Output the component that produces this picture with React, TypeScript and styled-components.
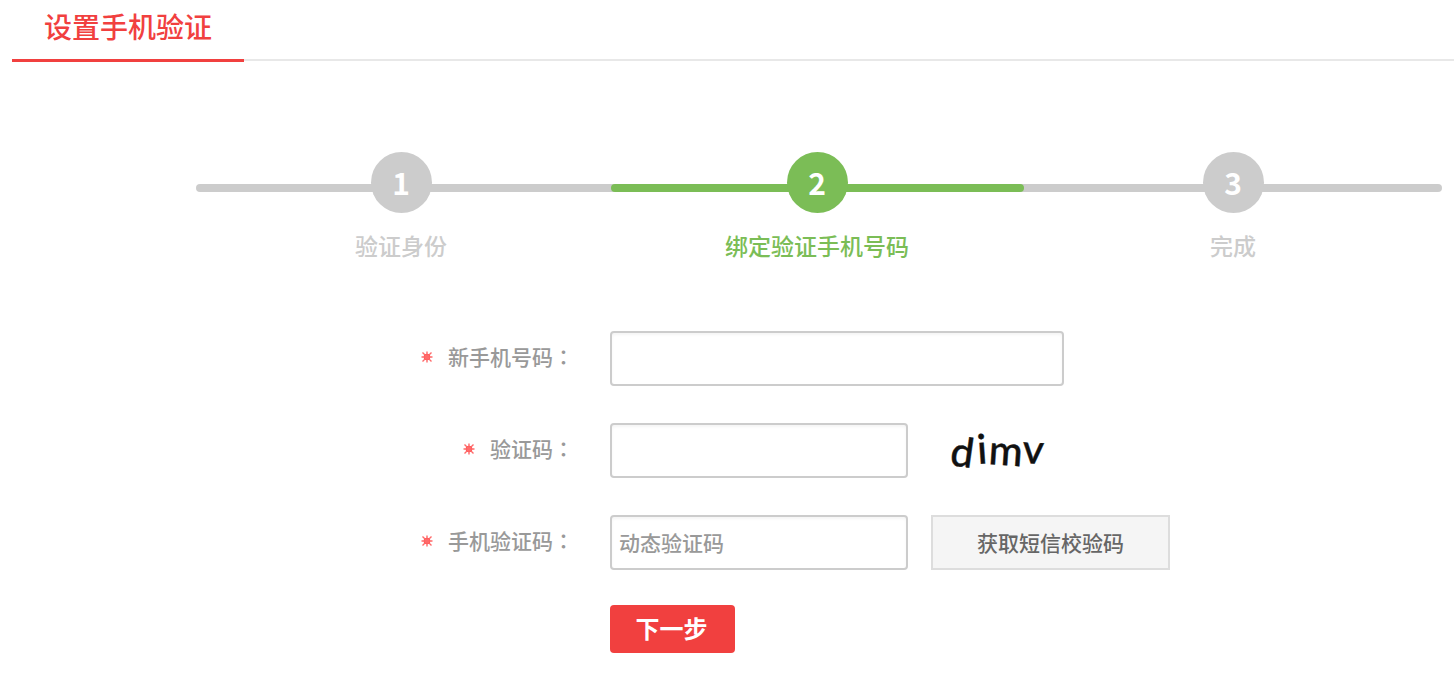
import React from 'react';
import styled, { createGlobalStyle } from 'styled-components';

const GlobalStyle = createGlobalStyle`
  *, *::before, *::after { box-sizing: border-box; }
  body {
    margin: 0;
    background: #fff;
    font-family: "Noto Sans CJK SC", "Liberation Sans", sans-serif;
    font-weight: 500;
    color: #999;
  }
  button, input { font-family: inherit; font-weight: inherit; }
`;

const Header = styled.header`
  display: flex;
  margin-left: 12px;
  height: 61px;
  border-bottom: 2px solid #e8e8e8;
`;

const Tab = styled.h1`
  margin: 0 0 -3px;
  width: 232px;
  padding: 6px 32px 0;
  border-bottom: 3px solid #f1403f;
  color: #f1403f;
  font-size: 28px;
  line-height: 40px;
  font-weight: 500;
  white-space: nowrap;
`;

const Steps = styled.ol`
  display: grid;
  grid-template-columns: repeat(3, 1fr);
  list-style: none;
  margin: 91px 13px 0 193px;
  padding: 0;
`;

const Step = styled.li<{ $active?: boolean }>`
  color: ${(p) => (p.$active ? '#7bbd56' : '#ccc')};
  text-align: center;
`;

const Marker = styled.div`
  display: grid;
  align-items: center;
  justify-items: center;
`;

const Rail = styled.div<{ $edge?: 'start' | 'end' }>`
  grid-area: 1 / 1;
  justify-self: stretch;
  height: 8px;
  margin-top: 10px;
  margin-left: ${(p) => (p.$edge === 'start' ? '3px' : '0')};
  margin-right: ${(p) => (p.$edge === 'end' ? '-1px' : '0')};
  padding: 0 1px 0 2px;
  background: #ccc;
  border-radius: ${(p) =>
    p.$edge === 'start' ? '4px 0 0 4px' : p.$edge === 'end' ? '0 4px 4px 0' : '0'};
`;

const RailFill = styled.div`
  height: 8px;
  border-radius: 4px;
  background: #7bbd56;
`;

const Circle = styled.span`
  grid-area: 1 / 1;
  z-index: 1;
  width: 61px;
  height: 61px;
  border-radius: 50%;
  background: currentColor;
`;

const Digit = styled.span`
  display: block;
  color: #fff;
  font-size: 30px;
  line-height: 61px;
  font-weight: 700;
`;

const StepName = styled.div`
  margin-top: 15px;
  font-size: 23px;
  line-height: 34px;
`;

const Form = styled.form`
  display: grid;
  grid-template-columns: 574px 1fr;
  column-gap: 36px;
  row-gap: 37px;
  align-items: center;
  margin-top: 69px;
`;

const Label = styled.label`
  display: flex;
  align-items: center;
  justify-content: flex-end;
  gap: 15px;
  padding-bottom: 6px;
  font-size: 21px;
  line-height: 30px;
  white-space: nowrap;
`;

const Colon = styled.span`
  font-family: "Noto Sans CJK TC", sans-serif;
`;

const Field = styled.div`
  display: flex;
  align-items: center;
  gap: 23px;
`;

const TextInput = styled.input<{ $wide?: boolean }>`
  width: ${(p) => (p.$wide ? '454px' : '298px')};
  height: 55px;
  padding: 0 7px 2px;
  border: 2px solid #ccc;
  border-radius: 4px;
  background: #fff;
  box-shadow: inset 0 2px 3px #f5f5f5;
  color: #333;
  font-size: 21px;
  outline: none;
  &::placeholder { color: #999; opacity: 1; }
`;

const SmsButton = styled.button`
  width: 239px;
  height: 55px;
  padding: 0 0 2px;
  border: 2px solid #ddd;
  background: #f5f5f5;
  color: #666;
  font-size: 21px;
  cursor: pointer;
`;

const SubmitButton = styled.button`
  grid-column: 2;
  width: 125px;
  height: 48px;
  margin-top: -2px;
  padding: 0 2px 2px 0;
  border: 0;
  border-radius: 4px;
  background: #f1403f;
  color: #fff;
  font-size: 24px;
  line-height: 46px;
  font-weight: 700;
  cursor: pointer;
`;

const Captcha = styled.svg`
  display: block;
  font-family: Lato, sans-serif;
  font-size: 41px;
`;

const MarkIcon = styled.svg`
  position: relative;
  top: 1px;
`;

const RequiredMark = () => (
  <MarkIcon width="12" height="12" viewBox="0 0 12 12" aria-hidden="true">
    <circle cx="6" cy="6" r="3.3" fill="#ff4a4a" />
    <path
      d="M6 0.5V11.5M0.5 6H11.5M1.5 1.5L10.5 10.5M10.5 1.5L1.5 10.5"
      stroke="#ff6a6a"
      strokeWidth="1.4"
    />
  </MarkIcon>
);

const FieldLabel = ({ id, text }: { id: string; text: string }) => (
  <Label htmlFor={id}>
    <RequiredMark />
    <span>
      {text}
      <Colon>：</Colon>
    </span>
  </Label>
);

export default function App() {
  return (
    <>
      <GlobalStyle />
      <Header>
        <Tab>设置手机验证</Tab>
      </Header>
      <main>
        <Steps>
          <Step>
            <Marker>
              <Rail $edge="start" />
              <Circle><Digit>1</Digit></Circle>
            </Marker>
            <StepName>验证身份</StepName>
          </Step>
          <Step $active aria-current="step">
            <Marker>
              <Rail><RailFill /></Rail>
              <Circle><Digit>2</Digit></Circle>
            </Marker>
            <StepName>绑定验证手机号码</StepName>
          </Step>
          <Step>
            <Marker>
              <Rail $edge="end" />
              <Circle><Digit>3</Digit></Circle>
            </Marker>
            <StepName>完成</StepName>
          </Step>
        </Steps>
        <Form onSubmit={(e) => e.preventDefault()}>
          <FieldLabel id="phone" text="新手机号码" />
          <Field>
            <TextInput id="phone" type="tel" $wide />
          </Field>
          <FieldLabel id="captcha" text="验证码" />
          <Field>
            <TextInput id="captcha" type="text" />
            <Captcha width="130" height="55" viewBox="0 0 130 55" role="img" aria-label="dimv">
              <g fill="#111" stroke="#111" strokeWidth="0.4">
                <text x="18" y="42" transform="rotate(8 18 42)">d</text>
                <text x="47" y="41" transform="rotate(-4 47 41)">i</text>
                <text x="57" y="41" transform="rotate(4 57 41)">m</text>
                <text x="91" y="40" transform="rotate(3 91 40)">v</text>
              </g>
            </Captcha>
          </Field>
          <FieldLabel id="sms" text="手机验证码" />
          <Field>
            <TextInput id="sms" type="text" placeholder="动态验证码" />
            <SmsButton type="button">获取短信校验码</SmsButton>
          </Field>
          <SubmitButton type="submit">下一步</SubmitButton>
        </Form>
      </main>
    </>
  );
}
